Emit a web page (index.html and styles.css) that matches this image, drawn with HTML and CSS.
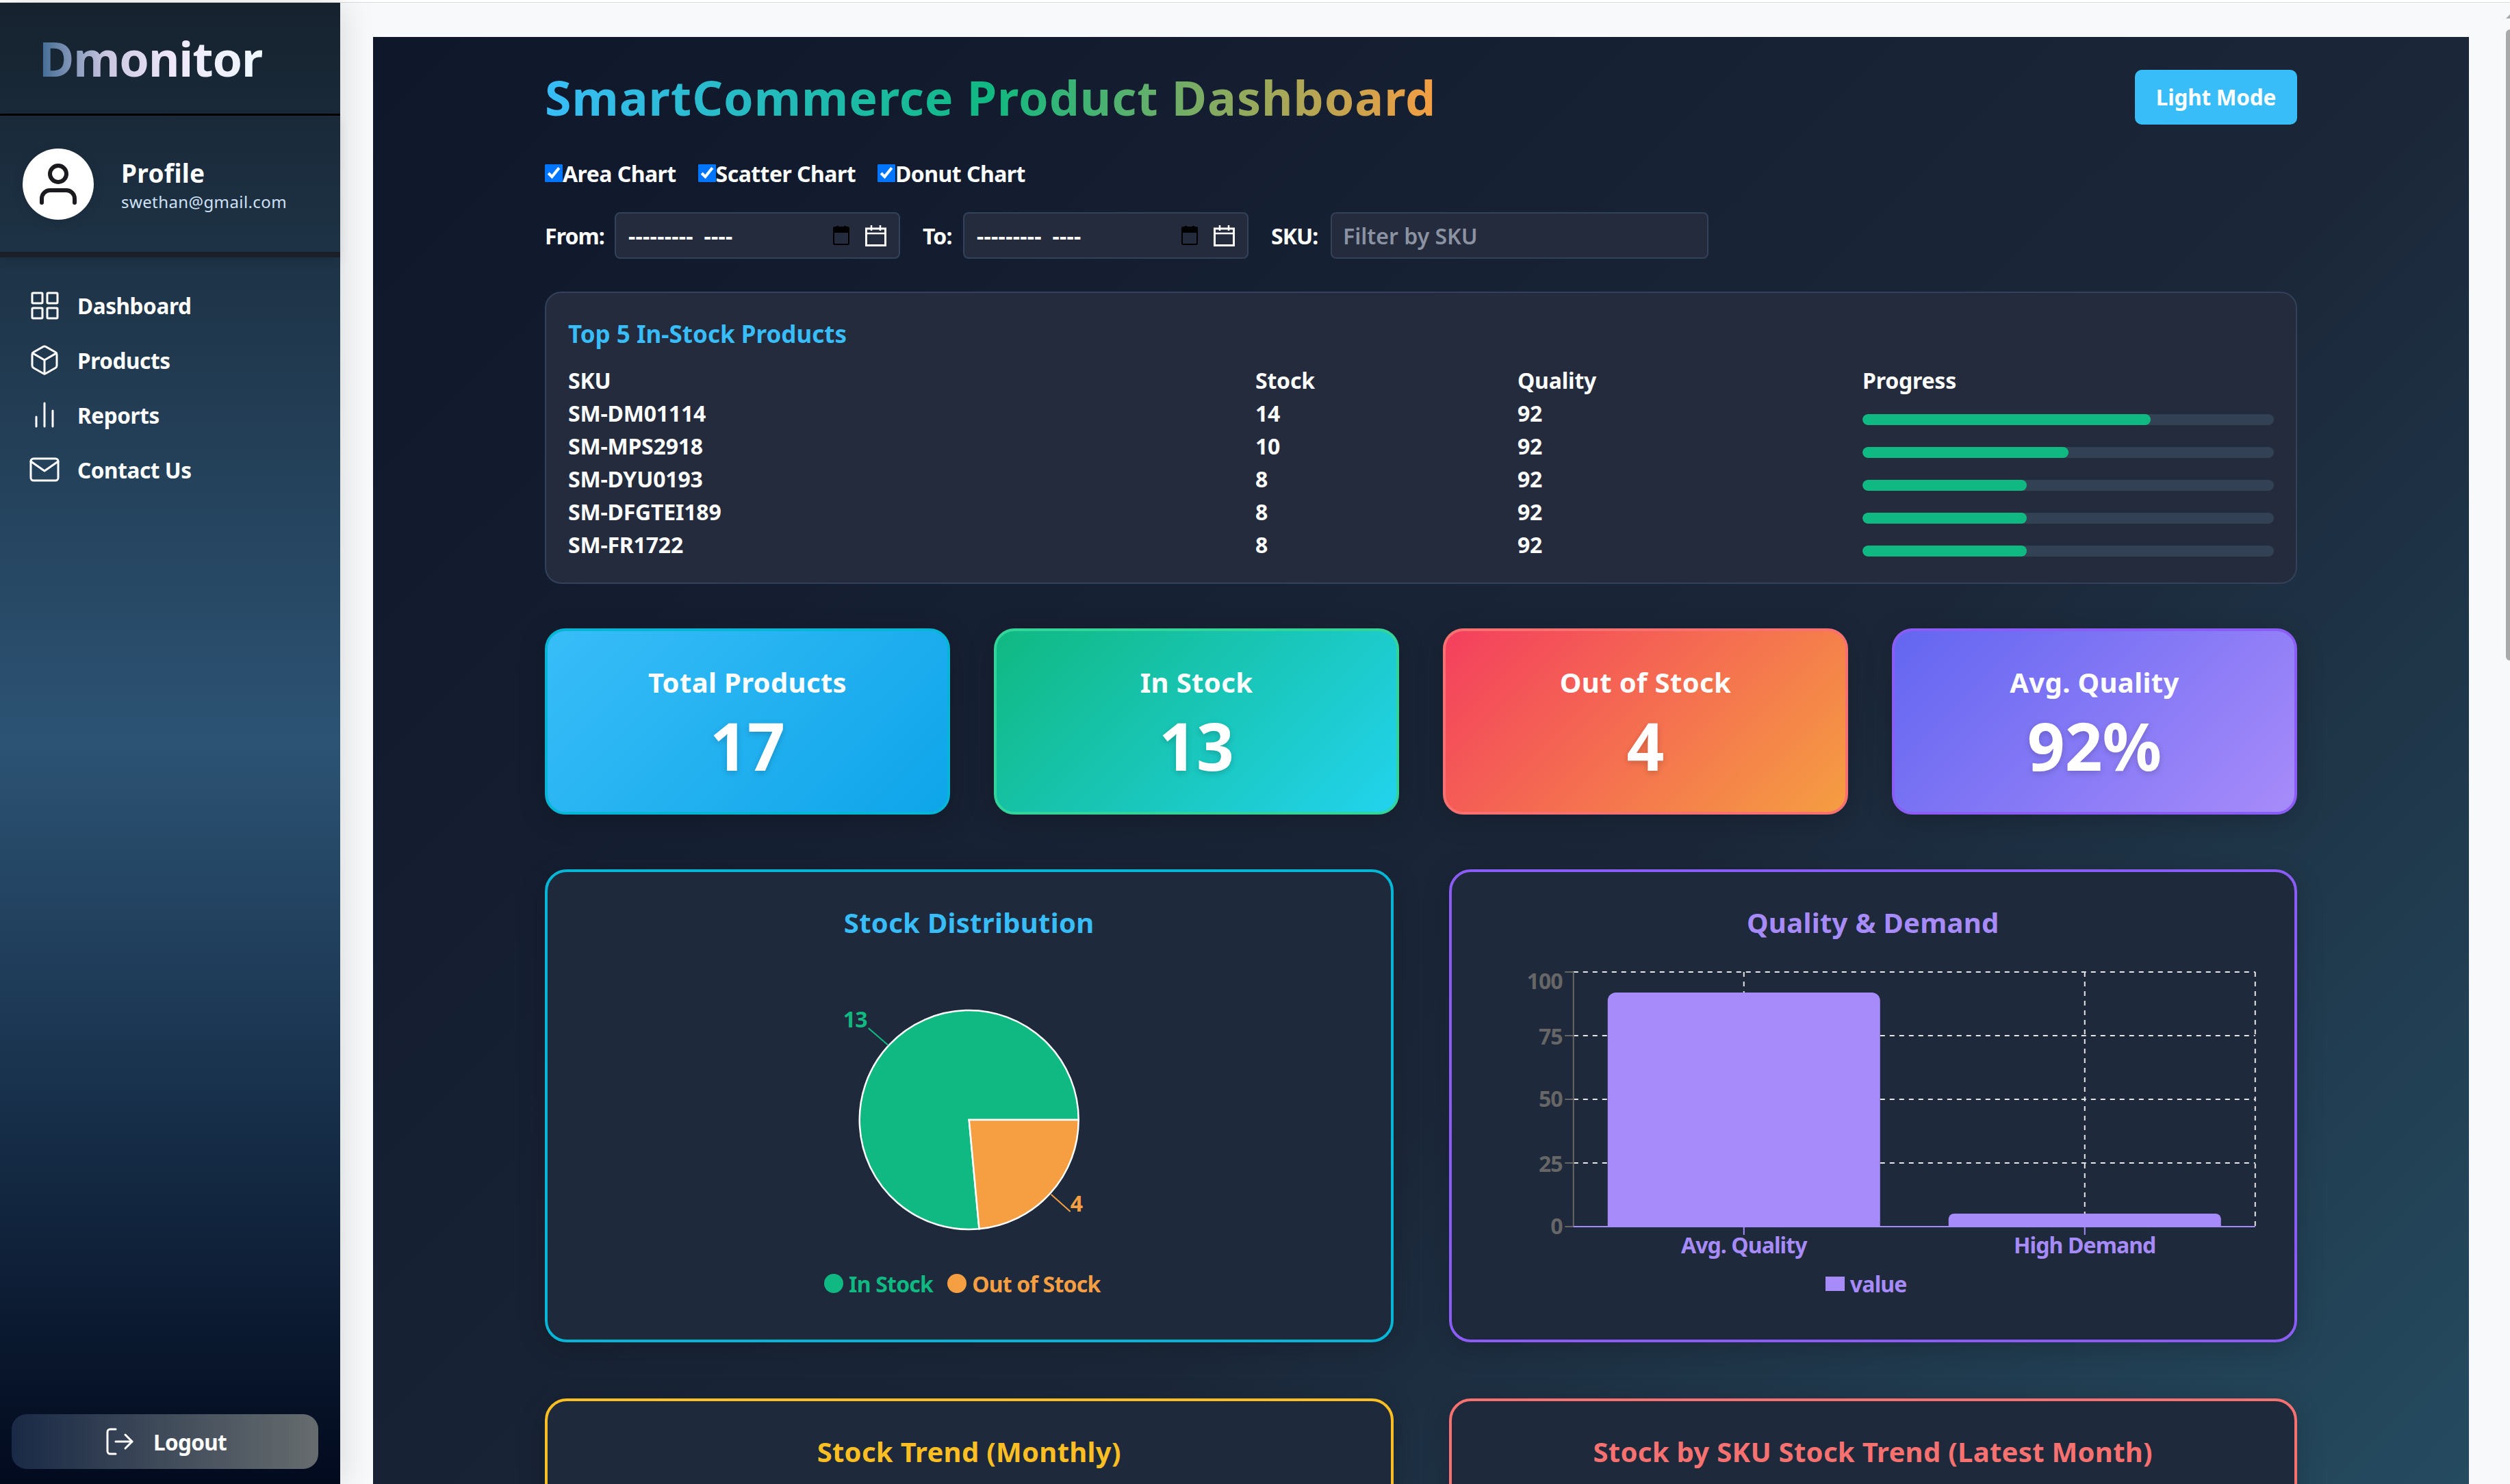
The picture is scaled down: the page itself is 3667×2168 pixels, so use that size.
FILE: index.html
```html
<!DOCTYPE html>
<html>
<head>
	<meta charset="UTF-8">
	<title>Dmonitor - SmartCommerce Product Dashboard</title>
	<link rel="stylesheet" href="styles.css">
</head>
<body>
	<div class="top-line"></div>
	<div class="app">
		<aside class="sidebar">
			<div class="logo-box"><span class="logo">Dmonitor</span></div>
			<div class="profile">
				<div class="avatar">
					<svg class="avatar-icon" viewBox="0 0 24 24"><path d="M20 21v-2a4 4 0 0 0-4-4H8a4 4 0 0 0-4 4v2"/><circle cx="12" cy="7" r="4"/></svg>
				</div>
				<div>
					<div class="profile-name">Profile</div>
					<div class="profile-mail">swethan@gmail.com</div>
				</div>
			</div>
			<nav class="nav">
				<a class="nav-item">
					<svg class="icon" viewBox="0 0 24 24"><rect x="3" y="3" width="7.5" height="7.5" rx="0.6"/><rect x="14" y="3" width="7.5" height="7.5" rx="0.6"/><rect x="3" y="14" width="7.5" height="7.5" rx="0.6"/><rect x="14" y="14" width="7.5" height="7.5" rx="0.6"/></svg>
					Dashboard
				</a>
				<a class="nav-item">
					<svg class="icon" viewBox="0 0 24 24"><path d="M21 16V8a2 2 0 0 0-1-1.73l-7-4a2 2 0 0 0-2 0l-7 4A2 2 0 0 0 3 8v8a2 2 0 0 0 1 1.73l7 4a2 2 0 0 0 2 0l7-4A2 2 0 0 0 21 16z"/><polyline points="3.27 6.96 12 12.01 20.73 6.96"/><line x1="12" y1="22.08" x2="12" y2="12"/></svg>
					Products
				</a>
				<a class="nav-item">
					<svg class="icon" viewBox="0 0 24 24"><line x1="6" y1="20.5" x2="6" y2="13.5"/><line x1="12" y1="20.5" x2="12" y2="3.5"/><line x1="18" y1="20.5" x2="18" y2="9"/></svg>
					Reports
				</a>
				<a class="nav-item">
					<svg class="icon" viewBox="0 0 24 24"><path d="M4 4h16c1.1 0 2 .9 2 2v12c0 1.1-.9 2-2 2H4c-1.1 0-2-.9-2-2V6c0-1.100.9-2 2-2z"/><polyline points="22 6 12 13 2 6"/></svg>
					Contact Us
				</a>
			</nav>
			<button class="logout">
				<svg class="icon" viewBox="0 0 24 24"><path d="M9 21H5a2 2 0 0 1-2-2V5a2 2 0 0 1 2-2h4"/><polyline points="16 17 21 12 16 7"/><line x1="21" y1="12" x2="9" y2="12"/></svg>
				Logout
			</button>
		</aside>

		<main class="main">
			<div class="panel">
				<header class="head">
					<h1 class="title">SmartCommerce Product Dashboard</h1>
					<button class="mode-btn">Light Mode</button>
				</header>

				<div class="checks">
					<label class="check"><input type="checkbox" checked>Area Chart</label>
					<label class="check"><input type="checkbox" checked>Scatter Chart</label>
					<label class="check"><input type="checkbox" checked>Donut Chart</label>
				</div>

				<div class="filters">
					<span class="filter-label label-from">From:</span>
					<div class="field date-field">
						<span class="date-text">--------- ----</span>
						<svg class="cal" viewBox="0 0 24 28"><rect x="1" y="2" width="22" height="25" rx="2" fill="none" stroke="#000" stroke-width="2"/><path d="M0 3h24v7H0z"/><path d="M5 0h3v3H5zM16 0h3v3h-3z"/></svg>
						<svg class="cal-white" viewBox="0 0 31 31"><rect x="1.500" y="5" width="28" height="24.500" fill="none" stroke="#fff" stroke-width="3"/><path d="M1.500 12h28M9 0v8M22 0v8" fill="none" stroke="#fff" stroke-width="2.500"/></svg>
					</div>
					<span class="filter-label label-to">To:</span>
					<div class="field date-field">
						<span class="date-text">--------- ----</span>
						<svg class="cal" viewBox="0 0 24 28"><rect x="1" y="2" width="22" height="25" rx="2" fill="none" stroke="#000" stroke-width="2"/><path d="M0 3h24v7H0z"/><path d="M5 0h3v3H5zM16 0h3v3h-3z"/></svg>
						<svg class="cal-white" viewBox="0 0 31 31"><rect x="1.500" y="5" width="28" height="24.500" fill="none" stroke="#fff" stroke-width="3"/><path d="M1.500 12h28M9 0v8M22 0v8" fill="none" stroke="#fff" stroke-width="2.500"/></svg>
					</div>
					<span class="filter-label label-sku">SKU:</span>
					<input class="field sku-field" type="text" placeholder="Filter by SKU">
				</div>

				<section class="top-card">
					<h2 class="top-title">Top 5 In-Stock Products</h2>
					<table class="top-table">
						<colgroup><col class="col-sku"><col class="col-stock"><col class="col-quality"><col></colgroup>
						<thead>
							<tr><th>SKU</th><th>Stock</th><th>Quality</th><th>Progress</th></tr>
						</thead>
						<tbody>
							<tr><td>SM-DM01114</td><td>14</td><td>92</td><td><div class="bar"><div class="bar-fill" style="width: 70%"></div></div></td></tr>
							<tr><td>SM-MPS2918</td><td>10</td><td>92</td><td><div class="bar"><div class="bar-fill" style="width: 50%"></div></div></td></tr>
							<tr><td>SM-DYU0193</td><td>8</td><td>92</td><td><div class="bar"><div class="bar-fill" style="width: 40%"></div></div></td></tr>
							<tr><td>SM-DFGTEI189</td><td>8</td><td>92</td><td><div class="bar"><div class="bar-fill" style="width: 40%"></div></div></td></tr>
							<tr><td>SM-FR1722</td><td>8</td><td>92</td><td><div class="bar"><div class="bar-fill" style="width: 40%"></div></div></td></tr>
						</tbody>
					</table>
				</section>

				<section class="stats">
					<div class="stat stat-blue"><div class="stat-label">Total Products</div><div class="stat-value">17</div></div>
					<div class="stat stat-green"><div class="stat-label">In Stock</div><div class="stat-value">13</div></div>
					<div class="stat stat-red"><div class="stat-label">Out of Stock</div><div class="stat-value">4</div></div>
					<div class="stat stat-purple"><div class="stat-label">Avg. Quality</div><div class="stat-value">92%</div></div>
				</section>

				<section class="charts">
					<div class="chart-card chart-cyan">
						<h3 class="chart-title title-blue">Stock Distribution</h3>
						<svg class="chart-svg" viewBox="0 0 1231 470">
							<path d="M615.500 256L630.300 415.300A160 160 0 1 1 775.500 256Z" fill="#10b981" stroke="#fff" stroke-width="2.500"/>
							<path d="M615.500 256L775.500 256A160 160 0 0 1 630.300 415.300Z" fill="#f59e42" stroke="#fff" stroke-width="2.500"/>
							<line x1="468.400" y1="122" x2="497.400" y2="147" stroke="#10b981" stroke-width="2"/>
							<line x1="735.400" y1="365" x2="763.400" y2="390" stroke="#f59e42" stroke-width="2"/>
							<text class="pie-label" x="466.400" y="121" text-anchor="end" fill="#10b981">13</text>
							<text class="pie-label" x="763.400" y="390" fill="#f59e42">4</text>
						</svg>
						<div class="legend">
							<span class="legend-item legend-green"><i class="dot"></i>In Stock</span>
							<span class="legend-item legend-orange"><i class="dot"></i>Out of Stock</span>
						</div>
					</div>

					<div class="chart-card chart-violet">
						<h3 class="chart-title title-violet">Quality &amp; Demand</h3>
						<svg class="chart-svg" viewBox="0 0 1231 470">
							<g class="grid-lines">
								<line x1="177.500" y1="40" x2="1173.500" y2="40"/>
								<line x1="177.500" y1="133" x2="1173.500" y2="133"/>
								<line x1="177.500" y1="226" x2="1173.500" y2="226"/>
								<line x1="177.500" y1="319" x2="1173.500" y2="319"/>
								<line x1="426.500" y1="40" x2="426.500" y2="412"/>
								<line x1="924.500" y1="40" x2="924.500" y2="412"/>
								<line x1="1173.500" y1="40" x2="1173.500" y2="412"/>
							</g>
							<path d="M227.500 412V82a12 12 0 0 1 12-12H613.500a12 12 0 0 1 12 12V412Z" fill="#a78bfa"/>
							<path d="M725.500 412V401a8 8 0 0 1 8-8H1115.500a8 8 0 0 1 8 8V412Z" fill="#a78bfa"/>
							<g stroke="#666" stroke-width="2">
								<line x1="177.500" y1="40" x2="177.500" y2="412"/>
								<line x1="165" y1="40" x2="177.500" y2="40"/>
								<line x1="165" y1="133" x2="177.500" y2="133"/>
								<line x1="165" y1="226" x2="177.500" y2="226"/>
								<line x1="165" y1="319" x2="177.500" y2="319"/>
								<line x1="165" y1="412" x2="177.500" y2="412"/>
							</g>
							<g stroke="#a78bfa" stroke-width="2">
								<line x1="177.500" y1="412" x2="1173.500" y2="412"/>
								<line x1="426.500" y1="412" x2="426.500" y2="424"/>
								<line x1="924.500" y1="412" x2="924.500" y2="424"/>
							</g>
							<g class="y-labels" text-anchor="end">
								<text x="161.500" y="65">100</text>
								<text x="161.500" y="146">75</text>
								<text x="161.500" y="237">50</text>
								<text x="161.500" y="332">25</text>
								<text x="161.500" y="423">0</text>
							</g>
							<g class="x-labels" text-anchor="middle">
								<text x="426.500" y="451">Avg. Quality</text>
								<text x="924.500" y="451">High Demand</text>
							</g>
						</svg>
						<div class="legend">
							<span class="legend-item legend-violet"><i class="square"></i>value</span>
						</div>
					</div>

					<div class="chart-card chart-amber">
						<h3 class="chart-title title-amber">Stock Trend (Monthly)</h3>
					</div>
					<div class="chart-card chart-coral">
						<h3 class="chart-title title-coral">Stock by SKU Stock Trend (Latest Month)</h3>
					</div>
				</section>
			</div>
		</main>
		<div class="scroll-arrow"></div>
		<div class="scroll-thumb"></div>
	</div>
</body>
</html>
```

FILE: styles.css
```css
* {
	box-sizing: border-box;
}

body {
	margin: 0;
	height: 100vh;
	overflow: hidden;
	display: flex;
	flex-direction: column;
	background: #f8f9fb;
	color: #fff;
	font-family: "Noto Sans", "Open Sans", sans-serif;
}

.top-line {
	height: 4px;
	flex: none;
	border-bottom: 1px solid #dcdcdc;
	background: #fff;
}

.app {
	flex: 1;
	min-height: 0;
	display: flex;
	position: relative;
}

/* Sidebar */
.sidebar {
	width: 497px;
	flex: none;
	display: flex;
	flex-direction: column;
	background: linear-gradient(180deg, #16222e 0%, #2c5374 50%, #020a1e 100%);
	box-shadow: 4px 0 44px rgba(0, 0, 0, 0.13);
	z-index: 1;
}

.logo-box {
	height: 165px;
	flex: none;
	padding: 33px 0 0 57px;
	border-bottom: 3px solid #000;
}

.logo {
	display: inline-block;
	font-size: 70px;
	line-height: 96px;
	font-weight: 700;
	letter-spacing: -1.1px;
	background: linear-gradient(90deg, #3f6a92 0%, #c9c6e0 30%, #efe8fb 60%, #eef8ff 100%);
	-webkit-background-clip: text;
	background-clip: text;
	color: transparent;
}

.profile {
	height: 207px;
	flex: none;
	display: flex;
	align-items: center;
	gap: 40px;
	padding-left: 33px;
	border-bottom: 8px solid #1b1f27;
	box-shadow: 0 6px 14px rgba(0, 0, 0, 0.08);
}

.avatar {
	width: 104px;
	height: 104px;
	border-radius: 50%;
	background: #fff;
	display: flex;
	align-items: center;
	justify-content: center;
	box-shadow: 0 4px 18px rgba(0, 0, 0, 0.1);
}

.avatar-icon {
	width: 72px;
	height: 72px;
	fill: none;
	stroke: #1b1b1f;
	stroke-width: 2;
	stroke-linecap: round;
	stroke-linejoin: round;
}

.profile-name {
	font-size: 37px;
	line-height: 50px;
	font-weight: 700;
	letter-spacing: 0.3px;
}

.profile-mail {
	font-size: 24px;
	line-height: 30px;
	letter-spacing: 0.4px;
	color: #cfe0f5;
	margin-top: 2px;
}

.nav {
	padding-top: 30px;
}

.nav-item {
	height: 80px;
	display: flex;
	align-items: center;
	gap: 24px;
	padding-left: 41px;
	font-size: 31.5px;
	font-weight: 700;
	letter-spacing: -0.4px;
}

.icon {
	width: 48px;
	height: 48px;
	flex: none;
	fill: none;
	stroke: #fff;
	stroke-width: 1.5;
	stroke-linecap: round;
	stroke-linejoin: round;
}

.logout {
	margin: auto 32px 22px 17px;
	height: 80px;
	flex: none;
	display: flex;
	align-items: center;
	justify-content: center;
	gap: 25px;
	border: 0;
	border-radius: 22px;
	background: linear-gradient(90deg, #1a2a46 0%, #666c6e 100%);
	color: #fff;
	font-family: inherit;
	font-size: 31.5px;
	font-weight: 700;
	letter-spacing: -0.7px;
}

/* Main panel */
.main {
	flex: 1;
	min-width: 0;
	padding: 50px 60px 0 48px;
}

.panel {
	height: 100%;
	overflow: hidden;
	padding: 48px 251px 0;
	background: linear-gradient(135deg, #0f172a 0%, #1b2739 60%, #254b60 100%);
}

.scroll-arrow {
	position: absolute;
	right: 0;
	top: 17px;
	border-left: 6px solid transparent;
	border-bottom: 6px solid #a9a9a9;
}

.scroll-thumb {
	position: absolute;
	right: 0;
	top: 39px;
	width: 6px;
	height: 922px;
	border-radius: 6px 0 0 6px;
	background: #a9a9a9;
}

.head {
	height: 80px;
	display: flex;
	align-items: center;
	justify-content: space-between;
}

.title {
	margin: 0;
	font-size: 70px;
	line-height: 90px;
	font-weight: 700;
	letter-spacing: 0.95px;
	background: linear-gradient(90deg, #38bdf8 0%, #10b981 50%, #f59e42 100%);
	-webkit-background-clip: text;
	background-clip: text;
	color: transparent;
}

.mode-btn {
	width: 237px;
	height: 80px;
	padding-bottom: 3px;
	border: 0;
	border-radius: 10px;
	background: #38bdf8;
	color: #fff;
	font-family: inherit;
	font-size: 31.5px;
	font-weight: 700;
	letter-spacing: -0.2px;
}

.checks {
	height: 40px;
	margin-top: 51px;
	display: flex;
	gap: 32px;
}

.check {
	display: flex;
	align-items: center;
	font-size: 32px;
	font-weight: 700;
	letter-spacing: -0.55px;
}

.check input {
	width: 26px;
	height: 26px;
	margin: 0;
	accent-color: #0075ff;
}

.filters {
	height: 68px;
	margin-top: 37px;
	display: flex;
	align-items: center;
}

.filter-label {
	flex: none;
	font-size: 32px;
	font-weight: 700;
	letter-spacing: -0.9px;
}

.label-from {
	width: 102px;
}

.label-to {
	width: 59px;
}

.label-sku {
	width: 87px;
}

.field {
	height: 68px;
	flex: none;
	background: #232b3d;
	border: 2px solid #33415a;
	border-radius: 8px;
	color: #fff;
	font-family: inherit;
	font-size: 32px;
}

.date-field {
	width: 417px;
	margin-right: 33px;
	display: flex;
	align-items: center;
	padding: 0 18px;
}

.date-text {
	flex: 1;
	font-weight: 700;
	letter-spacing: 0.3px;
	word-spacing: 7px;
}

.cal {
	width: 24px;
	height: 28px;
	margin-right: 23px;
}

.cal-white {
	width: 31px;
	height: 31px;
}

.sku-field {
	width: 552px;
	padding: 0 16px;
	font-weight: 600;
	outline: none;
}

.sku-field::placeholder {
	color: #8b93a3;
	opacity: 1;
}

/* Top products */
.top-card {
	height: 427px;
	margin-top: 48px;
	padding: 35px 32px 0;
	background: #232b3d;
	border: 2px solid #33415a;
	border-radius: 24px;
}

.top-title {
	margin: 0 0 18px;
	font-size: 35px;
	line-height: 50px;
	font-weight: 700;
	color: #38bdf8;
}

.top-table {
	width: 2492px;
	table-layout: fixed;
	border-collapse: collapse;
	font-size: 32px;
	letter-spacing: -0.2px;
}

.col-sku {
	width: 1004px;
}

.col-stock {
	width: 383px;
}

.col-quality {
	width: 504px;
}

.top-table th,
.top-table td {
	height: 48px;
	padding: 0;
	text-align: left;
	font-weight: 700;
}

.bar {
	height: 16px;
	margin-top: 20px;
	border-radius: 8px;
	background: #334155;
	overflow: hidden;
}

.bar-fill {
	height: 100%;
	border-radius: 8px;
	background: #10b981;
}

/* Stat cards */
.stats {
	margin-top: 65px;
	display: grid;
	grid-template-columns: repeat(4, 1fr);
	gap: 64px;
}

.stat {
	height: 272px;
	padding-top: 48px;
	text-align: center;
	border: 4px solid;
	border-radius: 30px;
	box-shadow: 0 8px 40px rgba(0, 0, 0, 0.2);
}

.stat-label {
	font-size: 40px;
	line-height: 54px;
	font-weight: 700;
	letter-spacing: 0.35px;
}

.stat-value {
	margin-top: 5px;
	font-size: 96px;
	line-height: 120px;
	font-weight: 700;
	text-shadow: 0 3px 10px rgba(0, 0, 0, 0.18);
}

.stat-blue {
	background: linear-gradient(135deg, #38bdf8, #0ea5e9);
	border-color: #06b6d4;
}

.stat-green {
	background: linear-gradient(135deg, #10b981, #22d3ee);
	border-color: #34d399;
}

.stat-red {
	background: linear-gradient(135deg, #f43f5e, #f59e42);
	border-color: #f87171;
}

.stat-purple {
	background: linear-gradient(135deg, #6366f1, #a78bfa);
	border-color: #8b5cf6;
}

/* Chart cards */
.charts {
	margin-top: 80px;
	display: grid;
	grid-template-columns: repeat(2, 1fr);
	gap: 82px 81px;
}

.chart-card {
	height: 691px;
	padding-top: 44px;
	background: #1e293b;
	border: 4px solid;
	border-radius: 32px;
	box-shadow: 0 8px 40px rgba(0, 0, 0, 0.18);
}

.chart-cyan {
	border-color: #06b6d4;
}

.chart-violet {
	border-color: #8b5cf6;
}

.chart-amber {
	border-color: #fbbf24;
}

.chart-coral {
	border-color: #f87171;
}

.chart-title {
	margin: 0 0 2px;
	font-size: 40px;
	line-height: 60px;
	font-weight: 700;
	letter-spacing: 0.3px;
	text-align: center;
}

.title-blue {
	color: #38bdf8;
}

.title-violet {
	color: #a78bfa;
}

.title-amber {
	color: #fbbf24;
}

.title-coral {
	color: #f87171;
}

.chart-svg {
	display: block;
	width: 100%;
	height: 470px;
	font-family: "Noto Sans", "Open Sans", sans-serif;
	font-size: 32px;
	font-weight: 700;
	letter-spacing: -0.9px;
}

.grid-lines line {
	stroke: #e6e6e6;
	stroke-width: 2;
	stroke-dasharray: 7 7;
}

.y-labels {
	fill: #666;
}

.x-labels {
	fill: #a78bfa;
}

.legend {
	height: 40px;
	margin-top: 5px;
	padding-right: 20px;
	display: flex;
	justify-content: center;
	align-items: center;
	gap: 21px;
	font-size: 32px;
	font-weight: 700;
	letter-spacing: -0.8px;
}

.legend-item {
	display: flex;
	align-items: center;
	gap: 8px;
}

.legend-green {
	color: #10b981;
}

.legend-orange {
	color: #f59e42;
}

.legend-violet {
	color: #a78bfa;
}

.dot {
	width: 28px;
	height: 28px;
	border-radius: 50%;
	background: currentColor;
}

.square {
	width: 28px;
	height: 21px;
	background: currentColor;
}
```
